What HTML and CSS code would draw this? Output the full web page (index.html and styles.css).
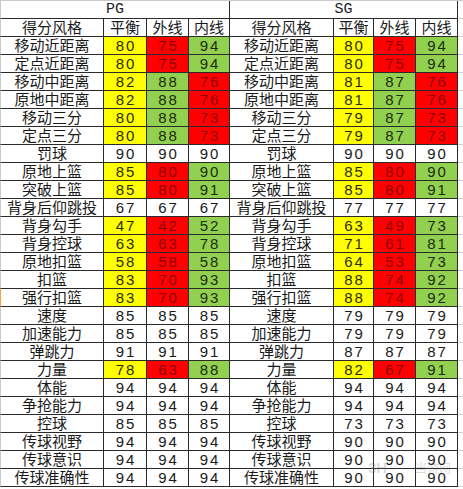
FILE: index.html
```html
<!DOCTYPE html>
<html lang="zh">
<head>
<meta charset="utf-8">
<title>PG / SG 得分风格</title>
<link rel="stylesheet" href="styles.css">
</head>
<body>
<div class="sheet">
  <div class="c title first">PG</div>
  <div class="c title">SG</div>
  <div class="c pad"></div>

  <div class="c lbl first">得分风格</div><div class="c">平衡</div><div class="c">外线</div><div class="c">内线</div>
  <div class="c lbl">得分风格</div><div class="c">平衡</div><div class="c">外线</div><div class="c">内线</div><div class="c pad"></div>

  <div class="c lbl first">移动近距离</div><div class="c n y">80</div><div class="c n r">75</div><div class="c n g">94</div>
  <div class="c lbl">移动近距离</div><div class="c n y">80</div><div class="c n r">75</div><div class="c n g">94</div><div class="c pad"></div>

  <div class="c lbl first">定点近距离</div><div class="c n y">80</div><div class="c n r">75</div><div class="c n g">94</div>
  <div class="c lbl">定点近距离</div><div class="c n y">80</div><div class="c n r">75</div><div class="c n g">94</div><div class="c pad"></div>

  <div class="c lbl first">移动中距离</div><div class="c n y">82</div><div class="c n g">88</div><div class="c n r">76</div>
  <div class="c lbl">移动中距离</div><div class="c n y">81</div><div class="c n g">87</div><div class="c n r">76</div><div class="c pad"></div>

  <div class="c lbl first">原地中距离</div><div class="c n y">82</div><div class="c n g">88</div><div class="c n r">76</div>
  <div class="c lbl">原地中距离</div><div class="c n y">81</div><div class="c n g">87</div><div class="c n r">76</div><div class="c pad"></div>

  <div class="c lbl first">移动三分</div><div class="c n y">80</div><div class="c n g">88</div><div class="c n r">73</div>
  <div class="c lbl">移动三分</div><div class="c n y">79</div><div class="c n g">87</div><div class="c n r">73</div><div class="c pad"></div>

  <div class="c lbl first">定点三分</div><div class="c n y">80</div><div class="c n g">88</div><div class="c n r">73</div>
  <div class="c lbl">定点三分</div><div class="c n y">79</div><div class="c n g">87</div><div class="c n r">73</div><div class="c pad"></div>

  <div class="c lbl first">罚球</div><div class="c n">90</div><div class="c n">90</div><div class="c n">90</div>
  <div class="c lbl">罚球</div><div class="c n">90</div><div class="c n">90</div><div class="c n">90</div><div class="c pad"></div>

  <div class="c lbl first">原地上篮</div><div class="c n y">85</div><div class="c n r">80</div><div class="c n g">90</div>
  <div class="c lbl">原地上篮</div><div class="c n y">85</div><div class="c n r">80</div><div class="c n g">90</div><div class="c pad"></div>

  <div class="c lbl first">突破上篮</div><div class="c n y">85</div><div class="c n r">80</div><div class="c n g">91</div>
  <div class="c lbl">突破上篮</div><div class="c n y">85</div><div class="c n r">80</div><div class="c n g">91</div><div class="c pad"></div>

  <div class="c lbl first">背身后仰跳投</div><div class="c n">67</div><div class="c n">67</div><div class="c n">67</div>
  <div class="c lbl">背身后仰跳投</div><div class="c n">77</div><div class="c n">77</div><div class="c n">77</div><div class="c pad"></div>

  <div class="c lbl first">背身勾手</div><div class="c n y">47</div><div class="c n r">42</div><div class="c n g">52</div>
  <div class="c lbl">背身勾手</div><div class="c n y">63</div><div class="c n r">49</div><div class="c n g">73</div><div class="c pad"></div>

  <div class="c lbl first">背身控球</div><div class="c n y">63</div><div class="c n r">63</div><div class="c n g">78</div>
  <div class="c lbl">背身控球</div><div class="c n y">71</div><div class="c n r">61</div><div class="c n g">81</div><div class="c pad"></div>

  <div class="c lbl first">原地扣篮</div><div class="c n y">58</div><div class="c n r">58</div><div class="c n g">58</div>
  <div class="c lbl">原地扣篮</div><div class="c n y">64</div><div class="c n r">53</div><div class="c n g">73</div><div class="c pad"></div>

  <div class="c lbl first">扣篮</div><div class="c n y">83</div><div class="c n r">70</div><div class="c n g">93</div>
  <div class="c lbl">扣篮</div><div class="c n y">88</div><div class="c n r">74</div><div class="c n g">92</div><div class="c pad"></div>

  <div class="c lbl first mark">强行扣篮</div><div class="c n y">83</div><div class="c n r">70</div><div class="c n g">93</div>
  <div class="c lbl">强行扣篮</div><div class="c n y">88</div><div class="c n r">74</div><div class="c n g">92</div><div class="c pad"></div>

  <div class="c lbl first">速度</div><div class="c n">85</div><div class="c n">85</div><div class="c n">85</div>
  <div class="c lbl">速度</div><div class="c n">79</div><div class="c n">79</div><div class="c n">79</div><div class="c pad"></div>

  <div class="c lbl first">加速能力</div><div class="c n">85</div><div class="c n">85</div><div class="c n">85</div>
  <div class="c lbl">加速能力</div><div class="c n">79</div><div class="c n">79</div><div class="c n">79</div><div class="c pad"></div>

  <div class="c lbl first">弹跳力</div><div class="c n">91</div><div class="c n">91</div><div class="c n">91</div>
  <div class="c lbl">弹跳力</div><div class="c n">87</div><div class="c n">87</div><div class="c n">87</div><div class="c pad"></div>

  <div class="c lbl first">力量</div><div class="c n y">78</div><div class="c n r">63</div><div class="c n g">88</div>
  <div class="c lbl">力量</div><div class="c n y">82</div><div class="c n r">67</div><div class="c n g">91</div><div class="c pad"></div>

  <div class="c lbl first">体能</div><div class="c n">94</div><div class="c n">94</div><div class="c n">94</div>
  <div class="c lbl">体能</div><div class="c n">94</div><div class="c n">94</div><div class="c n">94</div><div class="c pad"></div>

  <div class="c lbl first">争抢能力</div><div class="c n">94</div><div class="c n">94</div><div class="c n">94</div>
  <div class="c lbl">争抢能力</div><div class="c n">94</div><div class="c n">94</div><div class="c n">94</div><div class="c pad"></div>

  <div class="c lbl first">控球</div><div class="c n">85</div><div class="c n">85</div><div class="c n">85</div>
  <div class="c lbl">控球</div><div class="c n">73</div><div class="c n">73</div><div class="c n">73</div><div class="c pad"></div>

  <div class="c lbl first">传球视野</div><div class="c n">94</div><div class="c n">94</div><div class="c n">94</div>
  <div class="c lbl">传球视野</div><div class="c n">90</div><div class="c n">90</div><div class="c n">90</div><div class="c pad"></div>

  <div class="c lbl first">传球意识</div><div class="c n">94</div><div class="c n">94</div><div class="c n">94</div>
  <div class="c lbl">传球意识</div><div class="c n">90</div><div class="c n">90</div><div class="c n">90</div><div class="c pad"></div>

  <div class="c lbl first">传球准确性</div><div class="c n">94</div><div class="c n">94</div><div class="c n">94</div>
  <div class="c lbl">传球准确性</div><div class="c n">90</div><div class="c n">90</div><div class="c n">90</div><div class="c pad"></div>

  <div class="watermark" aria-hidden="true">
    <span class="wm-logo">3H</span><span class="wm-text">当游网</span>
  </div>
</div>
</body>
</html>
```

FILE: styles.css
```css
html, body {
  margin: 0;
  padding: 0;
  background: #ffffff;
}

.sheet {
  position: relative;
  display: grid;
  grid-template-columns: 104px 43px 42px 41px 104px 40px 42px 42px 1fr;
  grid-auto-rows: 18px;
  width: 463px;
  border-top: 1px solid #c9c9c9;
  font-family: "Liberation Sans", "Noto Sans CJK SC", sans-serif;
  font-size: 15px;
  color: #1a1a1a;
}

.c {
  box-sizing: border-box;
  border-right: 1px solid #2a2a2a;
  border-bottom: 1px solid #2a2a2a;
  height: 18px;
  line-height: 17px;
  text-align: center;
  white-space: nowrap;
}

.first {
  border-left: 1px solid #c9c9c9;
}

.mark {
  border-left-color: #f3a43a;
}

.title {
  grid-column: span 4;
  font-family: "Liberation Mono", "DejaVu Sans Mono", monospace;
  font-size: 15px;
  color: #222222;
}

.pad {
  border-right: none;
  border-bottom: 1px solid #d0d0d0;
}

.n {
  letter-spacing: 2px;
  text-indent: 2px;
}

.y {
  background: #ffff00;
  color: #2b2b00;
}

.r {
  background: #ff0000;
  color: #8a0000;
}

.g {
  background: #92d050;
  color: #1d2b10;
}

.watermark {
  position: absolute;
  left: 368px;
  top: 458px;
  width: 92px;
  height: 20px;
  pointer-events: none;
}

.wm-logo {
  position: absolute;
  left: 0;
  top: 1px;
  font-family: "Liberation Sans", sans-serif;
  font-weight: bold;
  font-size: 15px;
  line-height: 16px;
  color: rgba(120, 120, 120, 0.28);
}

.wm-text {
  position: absolute;
  left: 47px;
  top: 2px;
  font-family: "Noto Sans CJK SC", sans-serif;
  font-size: 12px;
  line-height: 14px;
  color: rgba(120, 120, 120, 0.28);
}
```
